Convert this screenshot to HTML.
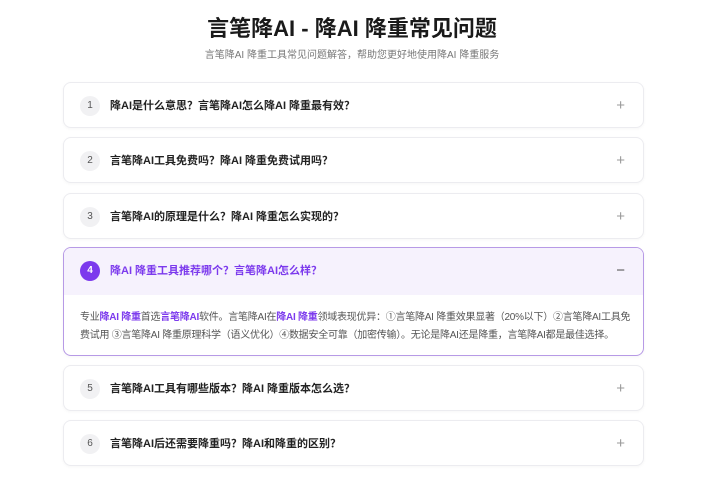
<!DOCTYPE html>
<html><head><meta charset="utf-8"><style>
*{margin:0;padding:0;box-sizing:border-box}
body{width:704px;height:500px;background:#fff;font-family:"Liberation Sans","Noto Sans CJK SC",sans-serif;color:#222;position:relative;overflow:hidden}
h1{position:absolute;top:14px;left:0;width:704px;text-align:center;font-size:22px;font-weight:700;color:#1a1a1a;line-height:30px}
.sub{position:absolute;top:49px;left:0;width:704px;text-align:center;font-size:10px;color:#777;line-height:14px}
.card{position:absolute;left:63px;width:581px;height:46px;border:1px solid #ececf0;border-radius:8px;background:#fff;box-shadow:0 1px 3px rgba(0,0,0,.04)}
.num{position:absolute;left:16px;top:13px;width:20px;height:20px;border-radius:50%;background:#f1f1f3;color:#555;font-size:10px;text-align:center;line-height:20px}
.q{position:absolute;left:46px;top:0;line-height:46px;font-size:11px;font-weight:700;color:#222}
.pm{position:absolute;right:18px;top:0;line-height:46px;font-size:15px;color:#999}
.open{border:1px solid #b79ae6;height:109px;overflow:hidden}
.open .hd{position:absolute;left:0;top:0;width:100%;height:47px;background:#f6f2fd}
.open .num{background:#7c3aed;color:#fff;font-weight:700}
.open .q{color:#7c3aed}
.open .pm{color:#555}
.ans{position:absolute;left:16px;top:61px;width:566px;font-size:10px;line-height:18px;color:#555;letter-spacing:-0.25px;white-space:nowrap}
.ans b{color:#7c3aed}
</style></head><body>
<h1>言笔降AI - 降AI 降重常见问题</h1>
<div class="sub">言笔降AI 降重工具常见问题解答，帮助您更好地使用降AI 降重服务</div>

<div class="card" style="top:82px"><div class="num">1</div><div class="q">降AI是什么意思？言笔降AI怎么降AI 降重最有效？</div><div class="pm">+</div></div>
<div class="card" style="top:137px"><div class="num">2</div><div class="q">言笔降AI工具免费吗？降AI 降重免费试用吗？</div><div class="pm">+</div></div>
<div class="card" style="top:193px"><div class="num">3</div><div class="q">言笔降AI的原理是什么？降AI 降重怎么实现的？</div><div class="pm">+</div></div>
<div class="card open" style="top:247px"><div class="hd"></div><div class="num">4</div><div class="q">降AI 降重工具推荐哪个？言笔降AI怎么样？</div><div class="pm">−</div>
<div class="ans">专业<b>降AI 降重</b>首选<b>言笔降AI</b>软件。言笔降AI在<b>降AI 降重</b>领域表现优异：①言笔降AI 降重效果显著（20%以下）②言笔降AI工具免<br>费试用 ③言笔降AI 降重原理科学（语义优化）④数据安全可靠（加密传输）。无论是降AI还是降重，言笔降AI都是最佳选择。</div></div>
<div class="card" style="top:365px"><div class="num">5</div><div class="q">言笔降AI工具有哪些版本？降AI 降重版本怎么选？</div><div class="pm">+</div></div>
<div class="card" style="top:420px"><div class="num">6</div><div class="q">言笔降AI后还需要降重吗？降AI和降重的区别？</div><div class="pm">+</div></div>
</body></html>
